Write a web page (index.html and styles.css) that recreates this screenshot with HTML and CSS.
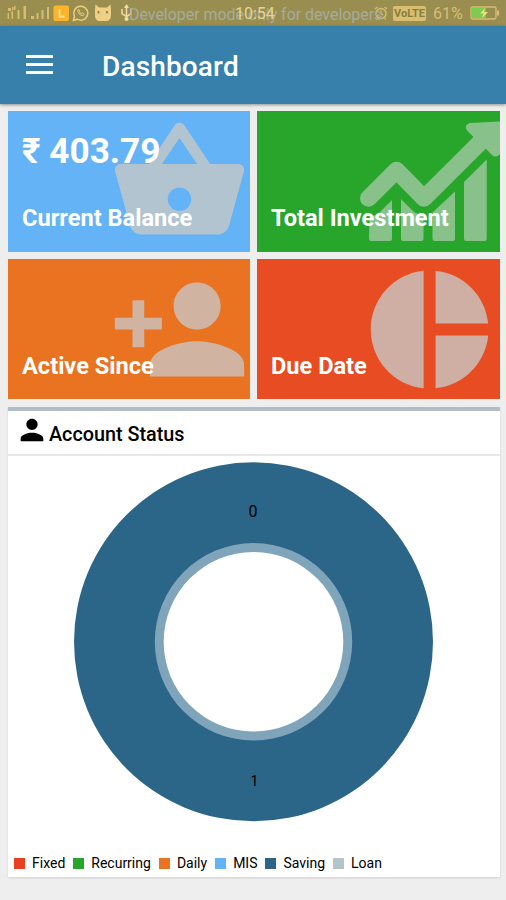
FILE: index.html
```html
<!DOCTYPE html>
<html lang="en">
<head>
    <meta charset="UTF-8">
    <meta name="viewport" content="width=device-width, initial-scale=1.0">
    <title>Dashboard</title>
    <link rel="stylesheet" href="styles.css">
</head>
<body>
<div class="status-bar">
    <svg class="status-icons" width="140" height="26" viewBox="0 0 140 26">
        <!-- signal -->
        <g fill="#d5bd6c">
            <path d="M8 8h3v3H8zM12 7h1.500v3H12zM7.500 13h1.500v6H7.500zM11.500 11h1.500v8h-1.500zM14 6h1.500v4H14zM17.500 10h2v9h-2zM23.500 6h2.500v13h-2.500z"/>
            <path d="M31 16h3v3h-3zM36.500 13h2v6h-2zM41.500 10h2v9h-2zM47 7h2v12h-2z"/>
        </g>
        <rect x="53.500" y="5.500" width="15.500" height="15.500" rx="2" fill="#fbb52d"/>
        <path d="M59.500 9v7.500h5" fill="none" stroke="#ffe08a" stroke-width="1.800"/>
        <!-- whatsapp -->
        <g fill="none" stroke="#e9cf7e" stroke-width="1.500">
            <path d="M73.500 20.300l1-4a7 7 0 1 1 2.700 2.900z"/>
            <path d="M78 9.500c-1.500 2 2.500 7 5.200 6l1-1.400-1.900-1.200-1 .8c-1-.4-1.600-1.200-2-2l.7-.9z" stroke-width="1"/>
        </g>
        <!-- android head -->
        <path d="M95.500 4.500l3.500 3h8l3.500-3 .5 5.500v5c0 4-2 6-5 6h-6c-3 0-5-2-5-6v-5z" fill="#eed084"/>
        <path d="M98.500 11v2.500M107 11v2.500" stroke="#8c8045" stroke-width="1.700"/>
        <!-- usb -->
        <g fill="none" stroke="#f2dc9e" stroke-width="1.500">
            <path d="M126.500 6v13M122 9v4.500l4.500 3 4.500-3V9"/>
        </g>
        <path d="M124 8l2.500-4 2.500 4z" fill="#f2dc9e"/>
        <circle cx="126.500" cy="19" r="2" fill="#f2dc9e"/>
    </svg>
    <span class="dev-mode">Developer mode only for developers</span>
    <span class="clock">10:54</span>
    <div class="status-right">
        <svg width="14" height="14" viewBox="0 0 14 14" fill="none" stroke="#d8bf70" stroke-width="1.300">
            <circle cx="7" cy="7.500" r="5"/>
            <path d="M7 4.500v3l2 1.500M1 3l2.500-2M13 3l-2.500-2M3.500 12L2 13.500M10.500 12l1.500 1.500"/>
        </svg>
        <span class="volte">VoLTE</span>
        <span class="percent">61%</span>
        <svg width="30" height="14" viewBox="0 0 30 14">
            <rect x="1" y="1" width="25" height="12" rx="1.500" fill="none" stroke="#d8bf70" stroke-width="1.300"/>
            <path d="M27 4.500h2v5h-2z" fill="#d8bf70"/>
            <path d="M2 2h14v10H2z" fill="#7dcb50"/>
            <path d="M15 2l-5 5.500h3.500L12 12l6-6h-4z" fill="#ece07c"/>
        </svg>
    </div>
</div>
<header class="app-bar">
    <button class="menu-btn" aria-label="Menu"><span></span><span></span><span></span></button>
    <h1>Dashboard</h1>
</header>
<main>
    <div class="cards">
        <div class="card balance">
            <svg class="card-icon" viewBox="0 0 24 24">
                <path d="M17.210 9l-4.380-6.560c-.19-.28-.51-.42-.83-.42-.32 0-.64.14-.83.43L6.790 9H2c-.55 0-1 .45-1 1 0 .09.010.18.040.27l2.540 9.270c.23.84 1 1.460 1.920 1.460h13c.92 0 1.690-.62 1.930-1.460l2.540-9.270L23 10c0-.55-.45-1-1-1h-4.790zM9 9l3-4.400L15 9H9zm3 8c-1.100 0-2-.9-2-2s.9-2 2-2 2 .9 2 2-.9 2-2 2z"/>
            </svg>
            <div class="value">₹ 403.79</div>
            <div class="label">Current Balance</div>
        </div>
        <div class="card investment">
            <svg class="card-icon" viewBox="101 0 141 141">
                <path d="M110.500 87.300L138.500 59.300 166 87.300 227 26.500" fill="none" stroke="currentColor" stroke-width="17" stroke-linecap="round" stroke-linejoin="round"/>
                <path d="M212 12L243 10.500V41.500Q239 48 234 44L227.500 37.500 215.500 26 209 19.500Q205.500 14 212 12z"/>
                <path d="M111.500 105.500Q118 105 122 101L134 89V127.500q0 2.500-2.500 2.500h-18q-2.500 0-2.500-2.500z"/>
                <path d="M143 88l12.500 12.500q4.500 3.500 10 3.500V127.500q0 2.500-2.500 2.500h-17.500q-2.500 0-2.500-2.500z"/>
                <path d="M174.500 101.500L197 80.500v47q0 2.500-2.500 2.500H177q-2.500 0-2.500-2.500z"/>
                <path d="M206 71l22.700-22.500v79q0 2.500-2.500 2.500h-17.700q-2.500 0-2.500-2.500z"/>
            </svg>
            <div class="label">Total Investment</div>
        </div>
        <div class="card active-since">
            <svg class="card-icon" viewBox="0 0 24 24">
                <path d="M15 12c2.210 0 4-1.790 4-4s-1.790-4-4-4-4 1.790-4 4 1.790 4 4 4zm-9-2V7H4v3H1v2h3v3h2v-3h3v-2H6zm9 4c-2.670 0-8 1.340-8 4v2h16v-2c0-2.660-5.330-4-8-4z"/>
            </svg>
            <div class="label">Active Since</div>
        </div>
        <div class="card due-date">
            <svg class="card-icon" viewBox="0 0 24 24">
                <path d="M11 2v20c-5.070-.5-9-4.790-9-10s3.930-9.500 9-10zm2.030 0v8.990H22c-.47-4.740-4.240-8.520-8.970-8.990zm0 11.010V22c4.740-.47 8.500-4.250 8.970-8.990h-8.970z"/>
            </svg>
            <div class="label">Due Date</div>
        </div>
    </div>
    <section class="panel">
        <div class="panel-header">
            <svg width="34" height="34" viewBox="0 0 24 24">
                <path d="M12 12c2.210 0 4-1.790 4-4s-1.790-4-4-4-4 1.790-4 4 1.790 4 4 4zm0 2c-2.670 0-8 1.340-8 4v2h16v-2c0-2.660-5.330-4-8-4z"/>
            </svg>
            <h2>Account Status</h2>
        </div>
        <svg class="chart" width="492" height="397" viewBox="0 0 492 397">
            <circle cx="245.500" cy="185.800" r="179.500" fill="#2b6688"/>
            <circle cx="245.500" cy="185.800" r="98.700" fill="#80a5bb"/>
            <circle cx="245.500" cy="185.800" r="89.800" fill="#fff"/>
            <text x="245" y="61">0</text>
            <text x="246.500" y="329.500" class="small">1</text>
        </svg>
        <ul class="legend">
            <li class="fixed">Fixed</li>
            <li class="recurring">Recurring</li>
            <li class="daily">Daily</li>
            <li class="mis">MIS</li>
            <li class="saving">Saving</li>
            <li class="loan">Loan</li>
        </ul>
    </section>
</main>
</body>
</html>
```
FILE: styles.css
```css
* { box-sizing: border-box; }

body {
    margin: 0;
    height: 900px;
    overflow: hidden;
    background-color: #eeeeee;
    font-family: Roboto, "Noto Sans", sans-serif;
}

/* Status bar */
.status-bar {
    position: relative;
    display: flex;
    justify-content: space-between;
    align-items: center;
    height: 26px;
    padding-right: 6px;
    background-color: #998e50;
    color: #d8bf70;
}

.dev-mode {
    position: absolute;
    left: 129px;
    top: 5px;
    font-size: 16px;
    line-height: 20px;
    letter-spacing: -0.04px;
    white-space: nowrap;
    color: #a3aca0;
}

.clock {
    position: absolute;
    left: 235px;
    top: 4px;
    font-size: 16px;
    line-height: 20px;
    color: #e8d48f;
}

.status-right {
    display: flex;
    align-items: center;
}

.volte {
    width: 33px;
    height: 15px;
    margin: 0 7px 0 5px;
    border-radius: 2px;
    background-color: #d8bf70;
    color: #887c40;
    font-size: 11px;
    font-weight: bold;
    line-height: 15px;
    text-align: center;
}

.percent {
    width: 37px;
    font-size: 16px;
}

/* App bar */
.app-bar {
    position: relative;
    display: flex;
    align-items: center;
    height: 78px;
    padding: 3px 26px 0;
    background-color: #3680ab;
    box-shadow: 0 1px 3px rgba(0, 0, 0, 0.4);
}

.menu-btn {
    display: flex;
    flex-direction: column;
    gap: 5px;
    width: 27px;
    padding: 0;
    margin: 0 49px 4px 0;
    border: none;
    background: none;
}

.menu-btn span {
    width: 27px;
    height: 3px;
    background-color: #fff;
}

h1 {
    margin: 0;
    color: #fff;
    font-size: 28px;
    font-weight: 500;
    letter-spacing: 0.15px;
}

main {
    padding: 7px 6px 0 8px;
}

/* Cards */
.cards {
    display: grid;
    grid-template-columns: 242px 243px;
    grid-template-rows: 141px 140px;
    gap: 7px;
}

.card {
    position: relative;
    display: flex;
    flex-direction: column;
    padding: 18px 14px;
    overflow: hidden;
    color: #fff;
    font-weight: bold;
}

.card-icon {
    position: absolute;
    top: 0;
    right: 0;
    width: 141px;
    height: 141px;
    fill: currentColor;
}

.value {
    position: relative;
    font-size: 35.2px;
    line-height: 44px;
}

.label {
    position: relative;
    margin-top: auto;
    font-size: 23.6px;
    line-height: 30px;
}

.balance { background-color: #64b3f6; }
.balance .card-icon { color: #b2c4cf; }
.investment { background-color: #27a62b; }
.investment .card-icon { color: #88c28a; }
.balance, .investment { padding-bottom: 19px; }
.active-since { background-color: #e97320; }
.active-since .card-icon { color: #d0b4a1; }
.due-date { background-color: #e84c22; }
.due-date .card-icon { color: #cfaea3; }

/* Account status */
.panel {
    height: 470px;
    margin-top: 8px;
    border-top: 4px solid #b0bec9;
    background-color: #fff;
    box-shadow: 0 1px 2px rgba(0, 0, 0, 0.12);
}

.panel-header {
    display: flex;
    align-items: center;
    height: 45px;
    padding-left: 7px;
    border-bottom: 2px solid #e8e8e8;
}

.panel-header svg {
    margin-bottom: 6px;
}

h2 {
    margin: 4px 0 0;
    font-size: 19.8px;
    font-weight: 500;
}

.chart {
    display: block;
}

.chart text {
    font-size: 16px;
    text-anchor: middle;
}

.chart .small {
    font-size: 14px;
}

.legend {
    display: flex;
    margin: 0;
    padding: 0 0 0 6px;
    list-style: none;
    font-size: 14px;
    line-height: 20px;
}

.legend li {
    display: flex;
    align-items: center;
    margin-right: 8px;
}

.legend li::before {
    content: "";
    width: 11px;
    height: 11px;
    margin-right: 7px;
}

.legend .fixed::before { background-color: #e84020; }
.legend .recurring::before { background-color: #27a62b; }
.legend .daily::before { background-color: #e97320; }
.legend .mis::before { background-color: #64b3f6; }
.legend .saving::before { background-color: #2b6688; }
.legend .loan::before { background-color: #b5c3cb; }
```
